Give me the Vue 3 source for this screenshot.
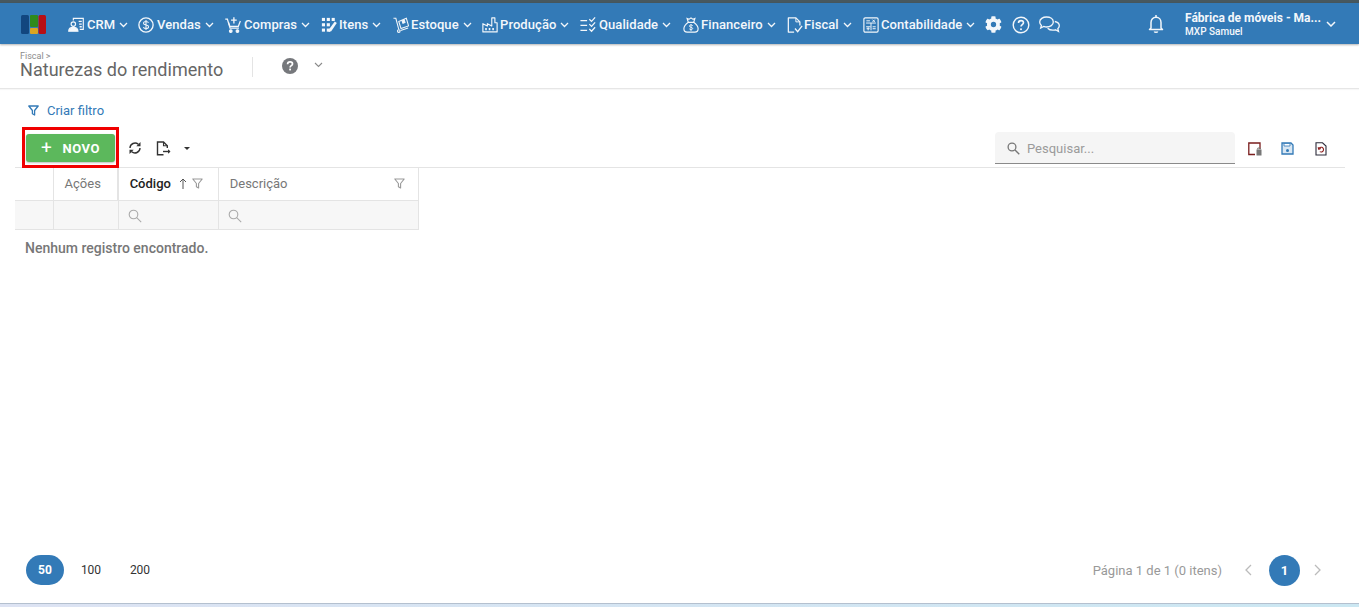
<script setup>
const nav = [
  { t: 'CRM', i: 'crm', w: 19, b: 70 },
  { t: 'Vendas', i: 'sale', w: 19, b: 87 },
  { t: 'Compras', i: 'cart', w: 19, b: 96 },
  { t: 'Itens', i: 'items', w: 18, b: 72 },
  { t: 'Estoque', i: 'stock', w: 18, b: 89 },
  { t: 'Produção', i: 'prod', w: 18, b: 98 },
  { t: 'Qualidade', i: 'qual', w: 19, b: 103 },
  { t: 'Financeiro', i: 'fin', w: 18, b: 104 },
  { t: 'Fiscal', i: 'fis', w: 17, b: 76 },
  { t: 'Contabilidade', i: 'cont', w: 18, b: 122 },
]
</script>

<template>
  <div class="page">
    <div class="strip"></div>
    <header class="topbar">
      <svg class="logo" width="25" height="19" viewBox="0 0 25 19">
        <rect x="0" y="0" width="8" height="19" rx="1.500" fill="#12467f" />
        <rect x="9" y="0" width="8" height="12" rx="1" fill="#2f8a1c" />
        <rect x="9" y="13" width="8" height="6" rx="1" fill="#dca521" />
        <rect x="17.500" y="0" width="7.500" height="19" rx="1.500" fill="#b70f15" />
      </svg>
      <nav class="nav">
        <a v-for="n in nav" :key="n.t" class="nav-item" :style="{ width: n.b + 'px' }">
          <span class="nav-icon" :style="{ width: n.w + 'px' }">
            <svg width="16" height="16" viewBox="0 0 18 18" fill="none" stroke="#f3f7fb" stroke-width="1.300">
              <g v-if="n.i === 'crm'">
                <circle cx="6" cy="8" r="2.500" />
                <path d="M.8 16c0-3 2-4.300 5.200-4.300s5.200 1.300 5.200 4.300z" fill="#f3f7fb" />
                <path d="M6 4V1.500h11.200V14h-4" />
                <path d="M12 5h3.500M12.500 8h3M13 11h2.500" stroke-width="1.500" />
              </g>
              <g v-else-if="n.i === 'sale'">
                <circle cx="9" cy="9" r="8" stroke-width="1.500" />
                <path d="M11.800 6.400C11.200 5.300 10.200 5 9 5 7.400 5 6.200 5.800 6.200 7c0 2.900 5.700 1.200 5.700 4 0 1.300-1.300 2-2.900 2-1.300 0-2.400-.5-3-1.500M9 3.300v11.400" stroke-width="1.200" />
              </g>
              <g v-else-if="n.i === 'cart'">
                <path d="M.3 2.500h2.400l3 10h10" stroke-width="1.400" />
                <path d="M4 6l1.500 4.500h9.500l2.300-6" stroke-width="1.400" />
                <path d="M10 .2v7M6.800 3.600h6.400" stroke-width="1.500" />
                <circle cx="6.500" cy="15.800" r="1.500" fill="#f3f7fb" />
                <circle cx="14" cy="15.800" r="1.500" fill="#f3f7fb" />
              </g>
              <g v-else-if="n.i === 'items'" fill="#f3f7fb" stroke="none">
                <rect x="1" y="1" width="3.500" height="3.500" /><rect x="6.500" y="1" width="3.500" height="3.500" /><rect x="12" y="1" width="3.500" height="3.500" />
                <rect x="1" y="7" width="3.500" height="3.500" /><rect x="6.500" y="7" width="3.500" height="3.500" />
                <rect x="1" y="13" width="3.500" height="3.500" /><rect x="6.500" y="13" width="3.500" height="3.500" />
                <path d="M15.500 5l2.300 1.700L11.500 16l-3 1 .4-3z" />
              </g>
              <g v-else-if="n.i === 'stock'" stroke-width="1.200">
                <path d="M.5 1.500h2.700L6.500 14" />
                <path d="M6.500 5l8.500-3.500 2.500 8.500-8.500 3z" />
                <path d="M10 3.800l1.200 3.200 2.300-.9-1.100-3.300" fill="#f3f7fb" />
                <circle cx="6.500" cy="15.800" r="1.500" />
                <path d="M8.500 15.300l8.500-3" />
              </g>
              <g v-else-if="n.i === 'prod'" stroke-width="1.300">
                <path d="M1 16.800V7.500l5 2.700V7.500l5 2.700V1h3.500v5.500H17v10.300z" stroke-linejoin="round" />
                <path d="M4.500 12.500v2.300M8.500 12.500v2.300M12.500 12.500v2.300" stroke-width="1.800" />
              </g>
              <g v-else-if="n.i === 'qual'" stroke-width="1.400">
                <path d="M.5 4h7.500M.5 9.500h7.500M.5 15h7.500" />
                <path d="M10.500 2.500l2.500 2.500 4-4.500M10.500 8l2.500 2.500 4-4.500M10.500 13.500l2.500 2.500 4-4.500" />
              </g>
              <g v-else-if="n.i === 'fin'" stroke-width="1.300">
                <path d="M6 6C3.200 8 1 10.800 1 13.300c0 2.300 1.700 3.700 3.700 3.700h8.600c2 0 3.700-1.400 3.700-3.700C17 10.800 14.800 8 12 6z" />
                <path d="M6 6L4.600 1.700 7 2.500 9 1l2 1.500 2.400-.8L12 6" />
                <path d="M11 9.800c-.4-.6-1.200-.9-2-.9-1 0-1.800.5-1.800 1.300 0 1.800 3.700 1 3.700 2.700 0 .8-.9 1.300-1.900 1.300-.8 0-1.500-.3-1.900-.9M9 8v7.800" stroke-width="1" />
              </g>
              <g v-else-if="n.i === 'fis'" stroke-width="1.400">
                <path d="M8 17H1.500V1h8.500l4.500 4.500v4" stroke-linejoin="round" />
                <path d="M10 1v4.500h4.500" stroke-width="1.100" />
                <path d="M9 13l3 3.500 5-6.500" stroke-width="1.500" />
              </g>
              <g v-else stroke-width="1.300">
                <rect x="1" y="1" width="16" height="16" rx="1.500" />
                <path d="M3.500 6.800h11M9 6.800V15M3.500 11h5" stroke-width="1.100" />
                <path d="M3.800 4.300h4M10.700 3l2.600 2.600M13.300 3l-2.600 2.600M4 13.200h3.500M5.800 11.500v3.500M10.800 11h3.500M10.800 13.200h3.500" stroke-width="1.100" />
              </g>
            </svg>
          </span>
          <span class="nav-text">{{ n.t }}</span>
          <svg class="chev" width="9" height="6" viewBox="0 0 9 6" fill="none" stroke="#f3f7fb" stroke-width="1.300"><path d="M1 1l3.500 3.500L8 1" /></svg>
        </a>
        <div class="nav-tools">
          <svg width="17" height="17" viewBox="0 0 512 512" fill="#f3f7fb"><path d="M487 316l-43-25c4-23 4-47 0-70l43-25c5-3 7-9 5-14-11-36-31-69-56-96-4-4-10-5-15-3l-42 25c-18-15-39-27-61-35V24c0-6-4-10-9-11-37-8-75-8-111 0-5 1-9 5-9 11v49c-22 8-43 20-61 35L86 83c-5-3-11-2-15 2-25 27-45 60-56 96-2 5 0 11 5 14l43 25c-4 23-4 47 0 70l-43 25c-5 3-7 9-5 14 11 36 31 69 56 96 4 4 10 5 15 3l42-25c18 15 39 27 61 35v49c0 6 4 10 9 11 37 8 75 8 111 0 5-1 9-5 9-11v-49c22-8 43-20 61-35l42 25c5 3 11 2 15-2 25-27 45-60 56-96 2-6 0-12-5-15zM256 336a80 80 0 110-160 80 80 0 010 160z" /></svg>
          <svg width="18" height="18" viewBox="0 0 18 18" fill="none" stroke="#f3f7fb" stroke-width="1.400"><circle cx="9" cy="9" r="7.800" /><path d="M6.500 7c0-1.500 1.100-2.400 2.500-2.400s2.500.9 2.500 2.100c0 1.900-2.500 1.900-2.500 3.800" stroke-width="1.600" /><circle cx="9" cy="13.200" r="1" fill="#f3f7fb" stroke="none" /></svg>
          <svg class="chat" width="21" height="17" viewBox="0 0 21 17" fill="none" stroke="#f3f7fb" stroke-width="1.300"><path d="M7.500 1C3.900 1 .7 3 .7 6c0 1.400.7 2.500 1.700 3.400L1.700 12l3-1.600c1 .4 1.900.6 2.800.6 3.800 0 6.800-2 6.800-5s-3-5-6.800-5z" /><path d="M15.800 5.500c2.500.6 4.500 2.200 4.500 4.200 0 1.200-.6 2.200-1.500 3l.7 2.800-3-1.700c-1 .3-1.800.4-2.700.4-2.200 0-4-.8-5.200-2" /></svg>
        </div>
      </nav>
      <div class="top-right">
        <svg class="bell" width="18" height="20" viewBox="0 0 18 20" fill="none" stroke="#f3f7fb" stroke-width="1.500"><path d="M4 14V8.500C4 5.500 6 3.300 9 3.300s5 2.200 5 5.200V14l1.500 1.500h-13z" stroke-linejoin="round" /><path d="M9 1v2" /><path d="M7.300 17.500c.4 1 3 1 3.400 0" /></svg>
        <div class="user">
          <div class="user-name">Fábrica de móveis - Ma...</div>
          <div class="user-sub">MXP Samuel</div>
        </div>
        <svg width="10" height="6" viewBox="0 0 10 6" fill="none" stroke="#f3f7fb" stroke-width="1.500"><path d="M1 1l4 4 4-4" /></svg>
      </div>
    </header>

    <div class="titlebar">
      <div class="title-block">
        <div class="crumb">Fiscal &gt;</div>
        <div class="title">Naturezas do rendimento</div>
      </div>
      <div class="sep"></div>
      <svg class="help" width="16" height="16" viewBox="0 0 16 16"><circle cx="8" cy="8" r="8" fill="#76787c" /><path d="M5.600 6.200c0-1.500 1.100-2.300 2.500-2.300s2.400.8 2.400 2c0 1.800-2.400 1.700-2.400 3.500" fill="none" stroke="#fff" stroke-width="1.700" /><rect x="7.200" y="10.600" width="1.800" height="1.800" fill="#fff" /></svg>
      <svg class="help-chev" width="9" height="6" viewBox="0 0 9 6" fill="none" stroke="#8a8a8a" stroke-width="1.100"><path d="M1 1l3.500 3.500L8 1" /></svg>
    </div>

    <main class="content">
      <div class="filter">
        <svg width="11" height="11" viewBox="0 0 11 11" fill="none" stroke="#337ab7" stroke-width="1.300"><path d="M.8 1h9.400L6.600 5.500V10L4.400 8.700V5.500z" stroke-linejoin="round" /></svg>
        <span>Criar filtro</span>
      </div>

      <div class="toolbar">
        <div class="new-frame">
          <button class="new-btn"><span class="plus">+</span>NOVO</button>
        </div>
        <svg class="tool-refresh" width="14" height="14" viewBox="0 0 14 14" fill="none" stroke="#333" stroke-width="1.400"><path d="M2 7a5 5 0 018.300-3.700" /><path d="M12 7a5 5 0 01-8.300 3.700" /><path d="M12.500 1V5.200H8.300z" fill="#333" stroke="none" /><path d="M1.500 13V8.800h4.200z" fill="#333" stroke="none" /></svg>
        <svg class="tool-export" width="15" height="15" viewBox="0 0 15 15" fill="none" stroke="#333" stroke-width="1.400"><path d="M7.500 13.800H1.500V1h6l3.800 3.800V7" /><path d="M7.500 1v3.800h3.800" stroke-width="1.100" /><path d="M7 10.500h7" /><path d="M12 8.300v4.400l2.500-2.200z" fill="#333" stroke="none" /></svg>
        <span class="caret"></span>
        <div class="spacer"></div>
        <div class="search">
          <svg width="13" height="13" viewBox="0 0 13 13" fill="none" stroke="#777" stroke-width="1.300"><circle cx="5" cy="5" r="3.900" /><path d="M8 8l4.300 4.300" /></svg>
          <span>Pesquisar...</span>
        </div>
        <div class="tool-right">
          <svg width="14" height="14" viewBox="0 0 14 14" fill="none"><path d="M7 12.500H.8V1h11.200v6" stroke="#7a1d1d" stroke-width="1.300" /><rect x="8.500" y="7.500" width="5" height="6" fill="#777" /><path d="M9.800 7.500V6h2.400v1.500" stroke="#777" /></svg>
          <svg width="13" height="13" viewBox="0 0 13 13" fill="none"><path d="M1 1h9l2 2v9H1z" stroke="#337ab7" stroke-width="1.300" fill="#d9e7f3" /><circle cx="6.500" cy="8.500" r="1.500" fill="#337ab7" /><path d="M3 1.500h6v2.500H3z" fill="#fff" stroke="#337ab7" stroke-width=".8" /></svg>
          <svg class="last" width="12" height="14" viewBox="0 0 12 14" fill="none" stroke="#2b2b3a" stroke-width="1.100"><path d="M1 .8h6.500L11 4v9H1z" /><path d="M3.800 7a2.400 2.400 0 111 2.600" stroke="#8c1c1c" /><path d="M3.100 5.300l.7 2 2-.7" stroke="#8c1c1c" /></svg>
        </div>
      </div>

      <table class="grid">
        <colgroup><col class="c1" /><col class="c2" /><col class="c3" /><col class="c4" /></colgroup>
        <thead>
          <tr class="head">
            <th></th>
            <th>Ações</th>
            <th class="code">
              <div class="th-row">
                <span class="dark">Código</span>
                <svg class="arrow" width="8" height="11" viewBox="0 0 8 11" fill="none" stroke="#555" stroke-width="1"><path d="M4 11V1M1 4l3-3 3 3" /></svg>
                <svg class="fnl" width="11" height="11" viewBox="0 0 11 11" fill="none" stroke="#999" stroke-width="1.100"><path d="M.8 1h9.400L6.600 5.500V10L4.400 8.700V5.500z" stroke-linejoin="round" /></svg>
              </div>
            </th>
            <th>
              <div class="th-row">
                <span>Descrição</span>
                <svg class="fnl auto" width="11" height="11" viewBox="0 0 11 11" fill="none" stroke="#999" stroke-width="1.100"><path d="M.8 1h9.400L6.600 5.500V10L4.400 8.700V5.500z" stroke-linejoin="round" /></svg>
              </div>
            </th>
          </tr>
        </thead>
        <tbody>
          <tr class="filters">
            <td></td>
            <td></td>
            <td class="search-cell"><svg width="14" height="14" viewBox="0 0 14 14" fill="none" stroke="#aaa" stroke-width="1.100"><circle cx="5.500" cy="5.500" r="4.300" /><path d="M8.700 8.700l4.500 4.500" /></svg></td>
            <td class="search-cell"><svg width="14" height="14" viewBox="0 0 14 14" fill="none" stroke="#aaa" stroke-width="1.100"><circle cx="5.500" cy="5.500" r="4.300" /><path d="M8.700 8.700l4.500 4.500" /></svg></td>
          </tr>
        </tbody>
      </table>
      <div class="empty">Nenhum registro encontrado.</div>

      <div class="pager">
        <div class="sizes">
          <span class="size active">50</span>
          <span class="size">100</span>
          <span class="size">200</span>
        </div>
        <div class="pages">
          <span class="info">Página 1 de 1 (0 itens)</span>
          <svg class="pg-prev" width="8" height="12" viewBox="0 0 8 12" fill="none" stroke="#bbb" stroke-width="1.300"><path d="M7 1L2 6l5 5" /></svg>
          <span class="page-no">1</span>
          <svg class="pg-next" width="8" height="12" viewBox="0 0 8 12" fill="none" stroke="#bbb" stroke-width="1.300"><path d="M1 1l5 5-5 5" /></svg>
        </div>
      </div>
    </main>
    <div class="bottom"></div>
  </div>
</template>

<style>
html, body { margin: 0; padding: 0; overflow: hidden; background: #fff; }
</style>

<style scoped>
.page {
  width: 1359px;
  height: 607px;
  display: flex;
  flex-direction: column;
  font-family: Roboto, "Liberation Sans", sans-serif;
  color: #666;
  overflow: hidden;
  background: #fff;
}
.strip { height: 3px; background: #47585f; flex: none; }
.topbar {
  height: 41px;
  flex: none;
  box-sizing: border-box;
  padding-top: 1px;
  background: #337ab7;
  display: flex;
  align-items: center;
  padding-left: 21px;
  color: #f3f7fb;
  box-shadow: 0 1px 2px rgba(0, 0, 0, .3);
  position: relative;
  z-index: 1;
}
.logo { flex: none; margin-right: 22px; }
.nav { display: flex; align-items: center; padding-top: 1px; }
.nav-item { display: flex; align-items: center; box-sizing: border-box; flex: none; }
.nav-icon { display: flex; flex: none; }
.nav-text { font-size: 13px; font-weight: 500; line-height: 16px; letter-spacing: .08px; }
.chev { margin-left: 4px; }
.nav-tools { display: flex; align-items: center; gap: 10px; }
.chat { margin-left: -1px; }
.top-right { display: flex; align-items: center; margin-left: auto; padding-right: 23px; }
.bell { margin-right: 20px; }
.user { width: 136px; margin-right: 5px; }
.user-name { font-size: 12px; font-weight: 700; line-height: 14px; }
.user-sub { font-size: 10px; font-weight: 500; line-height: 12px; margin-top: 1px; }

.titlebar {
  height: 45px;
  flex: none;
  border-bottom: 1px solid #e6e6e6;
  box-sizing: border-box;
  display: flex;
  align-items: flex-start;
  padding-left: 20px;
  box-shadow: 0 1px 1px rgba(0, 0, 0, .03);
}
.title-block { width: 232px; padding-top: 7px; }
.crumb { font-size: 9px; line-height: 10px; color: #8b8b8b; }
.title { font-size: 18px; line-height: 18px; color: #666; letter-spacing: .04px; }
.sep { width: 1px; height: 20px; background: #e4e4e4; margin-top: 13px; }
.help { margin: 14px 0 0 29px; }
.help-chev { margin: 18px 0 0 16px; }

.content { flex: 1; display: flex; flex-direction: column; padding: 0 14px 0 15px; min-height: 0; }
.filter { display: flex; align-items: center; gap: 8px; padding-left: 13px; margin-top: 13px; height: 16px; color: #337ab7; font-size: 13px; }
.toolbar {
  display: flex;
  align-items: center;
  margin-top: 9px;
  height: 41px;
  flex: none;
  border-bottom: 1px solid #e4e4e4;
  box-sizing: border-box;
  padding-left: 7px;
}
.new-frame {
  border: 3px solid #f00000;
  width: 97px;
  height: 41px;
  box-sizing: border-box;
  flex: none;
  align-self: flex-start;
  padding: 4px 0 0 1px;
  position: relative;
}
.new-btn {
  width: 89px;
  height: 28px;
  border: 0;
  border-radius: 3px;
  background: #5cb85c;
  color: #fff;
  font: 700 13px Roboto, sans-serif;
  letter-spacing: .6px;
  display: flex;
  align-items: center;
  padding: 0 0 0 15px;
  box-shadow: 0 1px 2px rgba(0, 0, 0, .25);
}
.plus { font-size: 19px; font-weight: 400; margin-right: 10px; line-height: 20px; }
.tool-refresh { margin: 2px 0 0 9px; }
.tool-export { margin: 2px 0 0 14px; }
.caret { width: 0; height: 0; border-left: 3px solid transparent; border-right: 3px solid transparent; border-top: 3px solid #333; margin: 2px 0 0 13px; }
.spacer { flex: 1; }
.search {
  width: 240px;
  height: 32px;
  box-sizing: border-box;
  background: #f5f5f5;
  border-bottom: 1px solid #8a8a8a;
  border-radius: 4px 4px 0 0;
  display: flex;
  align-items: center;
  gap: 7px;
  padding: 1px 0 0 12px;
  font-size: 13px;
  color: #9b9b9b;
  align-self: flex-start;
  margin-top: 5px;
}
.tool-right { display: flex; align-items: center; gap: 19px; padding: 3px 18px 0 13px; }
.last { margin-left: 2px; }

.grid { border-collapse: collapse; table-layout: fixed; width: 404px; font-size: 13px; flex: none; }
.c1 { width: 38px; } .c2 { width: 65px; } .c3 { width: 100px; } .c4 { width: 200px; }
.grid th, .grid td { border: 1px solid #e4e4e4; padding: 0; box-sizing: border-box; }
.grid th:first-child, .grid td:first-child { border-left: 0; }
.grid tr.head th { border-top: 0; }
.head th { height: 32px; font-weight: 400; color: #777; text-align: left; padding: 0 11px; }
.head th:first-child { padding: 0; }
.head th.code { border-left-width: 2px; padding-left: 10.500px; }
.th-row { display: flex; align-items: center; }
.dark { color: #222; font-weight: 500; }
.arrow { margin-left: 8px; }
.fnl { margin-left: 5px; }
.fnl.auto { margin-left: auto; margin-right: 2px; }
.filters td { height: 29px; background: #f7f7f7; }
.grid td.search-cell { padding: 2px 0 0 9px; vertical-align: middle; }
.search-cell svg { display: block; }
.empty { font-size: 14px; font-weight: 500; color: #777; padding: 10px 0 0 10px; line-height: 16px; }
.pager { margin-top: auto; display: flex; justify-content: space-between; align-items: center; height: 30px; padding-bottom: 18px; padding-left: 11px; padding-right: 23px; }
.sizes { display: flex; align-items: center; font-size: 12px; color: #333; }
.size { width: 38px; text-align: center; margin-right: 11px; }
.size.active { height: 30px; line-height: 30px; border-radius: 15px; background: #337ab7; color: #fff; font-weight: 700; margin-right: 8px; }
.pages { display: flex; align-items: center; }
.info { font-size: 13px; color: #999; }
.pg-prev { margin-left: 22px; }
.page-no { width: 31px; height: 31px; line-height: 31px; border-radius: 50%; background: #337ab7; color: #fff; font-size: 13px; font-weight: 700; text-align: center; margin-left: 17px; }
.pg-next { margin-left: 14px; }
.bottom { height: 4px; flex: none; background: linear-gradient(90deg, #dde3f3, #cbe7f2); border-top: 1px solid #b4c0cf; box-sizing: border-box; }
</style>
